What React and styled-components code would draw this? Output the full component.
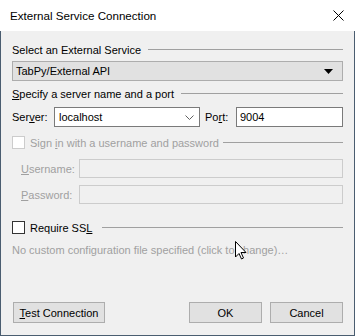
import React from 'react';
import styled, { createGlobalStyle } from 'styled-components';

const GlobalStyle = createGlobalStyle`
  html, body {
    margin: 0;
    padding: 0;
    background: #ffffff;
  }
  body {
    font-family: "Liberation Sans", Arial, sans-serif;
    font-size: 11px;
    color: #000000;
  }
`;

const Window = styled.div`
  position: relative;
  width: 355px;
  height: 336px;
  display: flex;
  flex-direction: column;
  box-sizing: border-box;
  overflow: hidden;
`;

const TitleBar = styled.div`
  height: 31px;
  flex: none;
  display: flex;
  align-items: center;
  justify-content: space-between;
  padding: 0 11px 0 10px;
  background: #ffffff;
  font-size: 11.6px;
`;

const Body = styled.div`
  flex: 1;
  display: flex;
  flex-direction: column;
  background: #f0f0f0;
  border: 1px solid #4a5d70;
  border-top: none;
  padding: 0 11px 12px 11px;
`;

const GroupHeader = styled.div`
  display: flex;
  align-items: center;
  gap: ${(p) => p.$gap || 7}px;
  height: 15px;
  margin-top: ${(p) => p.$top}px;
  color: ${(p) => (p.$disabled ? '#a0a0a0' : '#000000')};
  white-space: nowrap;

  &::after {
    content: '';
    flex: 1;
    height: 1px;
    background: #a0a0a0;
  }
`;

const Select = styled.div`
  margin-top: 4px;
  height: 20px;
  box-sizing: border-box;
  border: 1px solid #adadad;
  background: #e1e1e1;
  display: flex;
  align-items: center;
  justify-content: space-between;
  padding: 0 9px 0 3px;
`;

const FieldRow = styled.div`
  display: flex;
  align-items: center;
  margin-top: ${(p) => p.$top}px;
  padding-left: ${(p) => p.$indent || 0}px;
`;

const Label = styled.span`
  width: ${(p) => p.$width}px;
  margin-left: ${(p) => p.$left || 0}px;
  flex: none;
  color: ${(p) => (p.$disabled ? '#a0a0a0' : '#000000')};
`;

const Combo = styled.div`
  width: 146px;
  height: 20px;
  box-sizing: border-box;
  border: 1px solid #7a7a7a;
  background: #ffffff;
  display: flex;
  align-items: center;
  justify-content: space-between;
  padding: 0 5px 0 4px;
  flex: none;
`;

const TextInput = styled.div`
  flex: 1;
  height: ${(p) => p.$height || 20}px;
  box-sizing: border-box;
  border: 1px solid ${(p) => (p.$disabled ? '#cccccc' : '#7a7a7a')};
  background: ${(p) => (p.$disabled ? '#f0f0f0' : '#ffffff')};
  display: flex;
  align-items: center;
  padding-left: 3px;
`;

const CheckRow = styled.label`
  display: flex;
  align-items: center;
  gap: 5px;
  white-space: nowrap;
  color: ${(p) => (p.$disabled ? '#a0a0a0' : '#000000')};
`;

const Box = styled.span`
  width: 13px;
  height: 13px;
  box-sizing: border-box;
  border: 1px solid ${(p) => (p.$disabled ? '#cccccc' : '#333333')};
  background: #ffffff;
  flex: none;
`;

const Hint = styled.div`
  margin-top: 9px;
  color: #a0a0a0;
  white-space: nowrap;
`;

const Footer = styled.div`
  margin-top: auto;
  display: flex;
  align-items: center;
  padding-left: 1px;
`;

const Button = styled.button`
  height: 21px;
  width: ${(p) => p.$width}px;
  margin-left: ${(p) => p.$gap || 0}px;
  box-sizing: border-box;
  border: 1px solid #adadad;
  background: #e1e1e1;
  font-family: inherit;
  font-size: 11px;
  color: #000000;
  padding: 0;
  white-space: nowrap;
`;

const Spacer = styled.div`
  flex: 1;
`;

const Cursor = styled.svg`
  position: absolute;
  left: 235px;
  top: 241px;
`;

function Chevron() {
  return (
    <svg width="9" height="5" viewBox="0 0 9 5">
      <path d="M0.5 0.5 L4.5 4.5 L8.5 0.5" fill="none" stroke="#606060" strokeWidth="1" />
    </svg>
  );
}

function Triangle() {
  return (
    <svg width="9" height="5" viewBox="0 0 9 5">
      <path d="M0 0 H9 L4.5 5 Z" fill="#000000" />
    </svg>
  );
}

export default function App() {
  return (
    <>
      <GlobalStyle />
      <Window>
        <TitleBar>
          <span>External Service Connection</span>
          <svg width="11" height="11" viewBox="0 0 11 11">
            <path d="M0.5 0.5 L10.5 10.5 M10.5 0.5 L0.5 10.5" stroke="#000000" strokeWidth="1" />
          </svg>
        </TitleBar>
        <Body>
          <GroupHeader $top={11}>Select an External Service</GroupHeader>
          <Select>
            <span>TabPy/External API</span>
            <Triangle />
          </Select>

          <GroupHeader $top={5}>
            <span><u>S</u>pecify a server name and a port</span>
          </GroupHeader>
          <FieldRow $top={6}>
            <Label $width={42}>Ser<u>v</u>er:</Label>
            <Combo>
              <span>localhost</span>
              <Chevron />
            </Combo>
            <Label $width={31} $left={5}>Po<u>r</u>t:</Label>
            <TextInput>9004</TextInput>
          </FieldRow>

          <GroupHeader $top={8} $gap={4} $disabled>
            <CheckRow $disabled>
              <Box $disabled />
              <span>Sign <u>i</u>n with a username and password</span>
            </CheckRow>
          </GroupHeader>
          <FieldRow $top={9} $indent={9}>
            <Label $width={58} $disabled><u>U</u>sername:</Label>
            <TextInput $height={19} $disabled />
          </FieldRow>
          <FieldRow $top={7} $indent={9}>
            <Label $width={58} $disabled><u>P</u>assword:</Label>
            <TextInput $height={19} $disabled />
          </FieldRow>

          <GroupHeader $top={16} $gap={10}>
            <CheckRow>
              <Box />
              <span>Require SS<u>L</u></span>
            </CheckRow>
          </GroupHeader>
          <Hint>No custom configuration file specified (click to change)…</Hint>

          <Footer>
            <Button $width={92}><u>T</u>est Connection</Button>
            <Spacer />
            <Button $width={73}>OK</Button>
            <Button $width={73} $gap={8}>Cancel</Button>
          </Footer>
        </Body>
        <Cursor width="12" height="19" viewBox="0 0 12 19">
          <path
            d="M0.5 0.5 L0.5 16 L4 12.5 L6.5 18 L8.5 17 L6 11.5 L11 11.5 Z"
            fill="#ffffff"
            stroke="#000000"
            strokeWidth="1"
            strokeLinejoin="miter"
          />
        </Cursor>
      </Window>
    </>
  );
}
